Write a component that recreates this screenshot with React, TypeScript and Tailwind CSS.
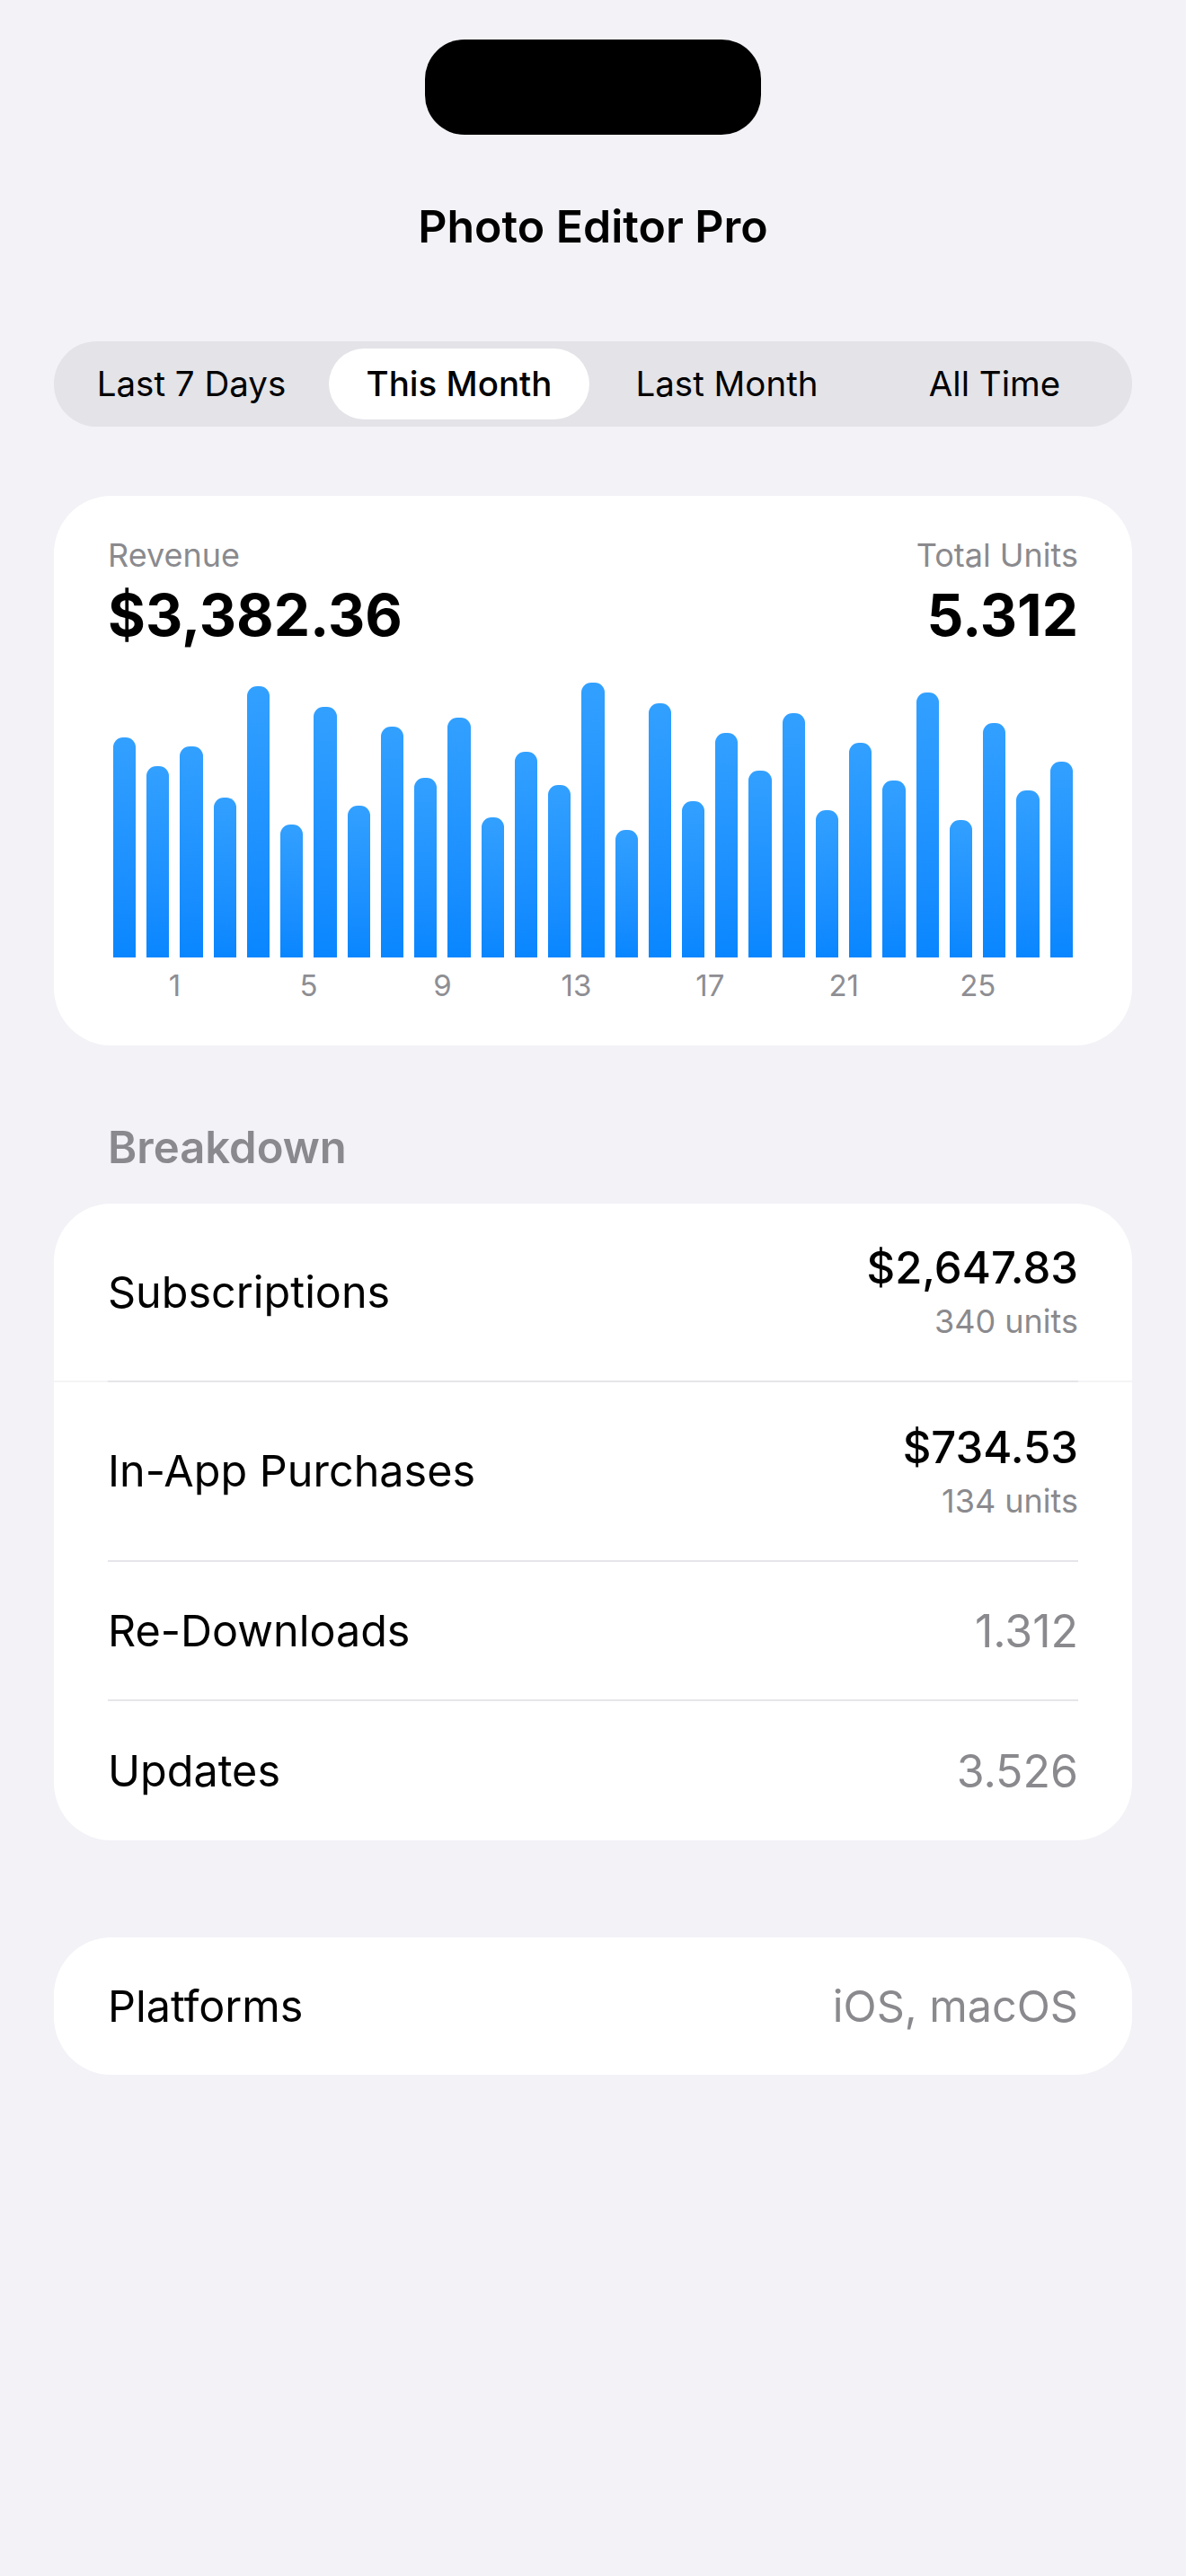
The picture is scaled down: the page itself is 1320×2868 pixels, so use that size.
import React from "react";

const bars = [245, 213, 235, 178, 302, 148, 279, 169, 257, 200, 267, 156, 229, 192, 306, 142, 283, 174, 250, 208, 272, 164, 239, 197, 295, 153, 261, 186, 218];
const labels = [1, 5, 9, 13, 17, 21, 25];
const PITCH = 37.24;

function Chart() {
  return (
    <div className="mt-[13px] px-[6px]">
      <div className="flex h-[330px] items-end gap-[12px]">
        {bars.map((h, i) => (
          <div
            key={i}
            className="flex-1 rounded-t-[11px] bg-linear-to-b from-[#32a0ff] to-[#0886ff]"
            style={{ height: `${h}px` }}
          />
        ))}
      </div>
      <div className="relative mt-[11px] h-[40px]">
        {labels.map((d) => (
          <span
            key={d}
            className="absolute top-0 -translate-x-1/2 text-[33px] leading-[40px] text-[#8e8e93]"
            style={{ left: `${PITCH * (d + 1) - 6}px` }}
          >
            {d}
          </span>
        ))}
      </div>
    </div>
  );
}

function Row({ label, value, sub, gray, h }: { label: string; value: string; sub?: string; gray?: boolean; h: string }) {
  return (
    <div className={`flex items-center justify-between px-[60px] ${h}`}>
      <span className="text-[48.5px] leading-[62px] text-black">{label}</span>
      {sub ? (
        <div className="flex flex-col items-end">
          <span className="text-[49px] font-medium leading-[60px] text-black">{value}</span>
          <span className="mt-[5px] text-[36px] leading-[48px] text-[#8a8a8e]">{sub}</span>
        </div>
      ) : (
        <span className={`leading-[62px] ${gray ? "text-[#8a8a8e]" : "text-black"} ${value.includes("OS") ? "text-[48.5px]" : "text-[50px]"}`}>{value}</span>
      )}
    </div>
  );
}

function Divider({ faint }: { faint?: boolean }) {
  return (
    <div className={`relative h-[2px] ${faint ? "bg-[#f4f4f6]" : ""}`}>
      <div className="mx-[60px] h-[2px] bg-[#e5e5ea]" />
    </div>
  );
}

export default function App() {
  const segs = ["Last 7 Days", "This Month", "Last Month", "All Time"];
  return (
    <div
      className="min-h-[2868px] w-[1320px] bg-[#f2f2f7] px-[60px]"
      style={{ fontFamily: "Inter, 'Noto Sans', sans-serif" }}
    >
      <div className="flex justify-center pt-[44px]">
        <div className="h-[106px] w-[374px] rounded-[44px] bg-black" />
      </div>
      <h1 className="mt-[71px] text-center text-[50px] font-semibold leading-[62px] text-black">Photo Editor Pro</h1>

      <div className="mt-[97px] grid h-[95px] grid-cols-4 gap-[8px] rounded-full bg-[#e3e3e8] p-[8px]">
        {segs.map((s) => (
          <div
            key={s}
            className={`flex items-center justify-center rounded-full text-[38.5px] text-black ${
              s === "This Month" ? "bg-white font-medium" : ""
            }`}
          >
            {s}
          </div>
        ))}
      </div>

      <div className="mt-[77px] rounded-[64px] bg-white px-[60px] pb-[47px] pt-[42px]">
        <div className="flex justify-between">
          <div className="flex flex-col">
            <span className="text-[36px] leading-[48px] text-[#8a8a8e]">Revenue</span>
            <span className="mt-[5px] text-[64px] font-bold leading-[76px] text-black">$3,382.36</span>
          </div>
          <div className="flex flex-col items-end">
            <span className="text-[36px] leading-[48px] text-[#8a8a8e]">Total Units</span>
            <span className="mt-[5px] text-[64px] font-bold leading-[76px] text-black">5.312</span>
          </div>
        </div>
        <Chart />
      </div>

      <h2 className="mt-[83px] px-[60px] text-[49px] font-semibold leading-[62px] text-[#8a8a8e]">Breakdown</h2>

      <div className="mt-[31px] overflow-hidden rounded-[64px] bg-white">
        <Row h="h-[197px]" label="Subscriptions" value="$2,647.83" sub="340 units" />
        <Divider faint />
        <Row h="h-[198px]" label="In-App Purchases" value="$734.53" sub="134 units" />
        <Divider />
        <Row h="h-[153px]" label="Re-Downloads" value="1.312" gray />
        <Divider />
        <Row h="h-[155px]" label="Updates" value="3.526" gray />
      </div>

      <div className="mt-[108px] overflow-hidden rounded-[64px] bg-white">
        <Row h="h-[153px]" label="Platforms" value="iOS, macOS" gray />
      </div>
    </div>
  );
}
